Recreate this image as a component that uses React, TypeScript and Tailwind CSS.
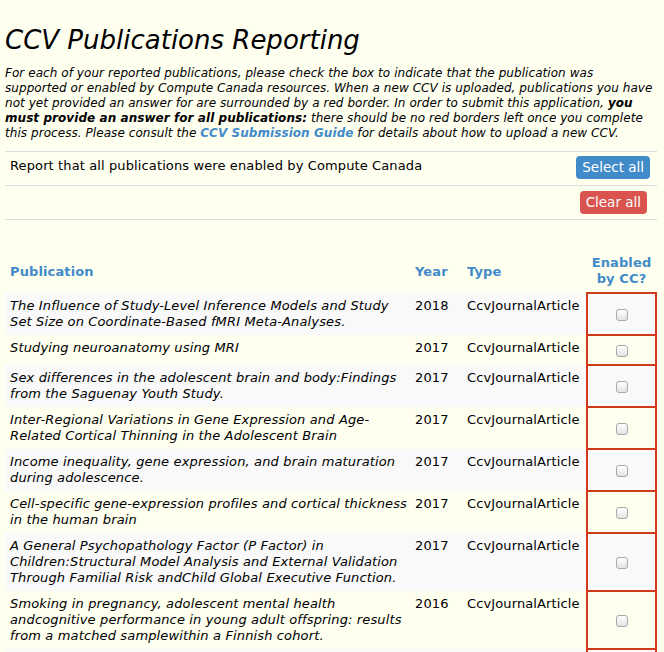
import React from "react"

const pubs = [
  { title: "The Influence of Study-Level Inference Models and Study Set Size on Coordinate-Based fMRI Meta-Analyses.", year: 2018 },
  { title: "Studying neuroanatomy using MRI", year: 2017 },
  { title: "Sex differences in the adolescent brain and body:Findings from the Saguenay Youth Study.", year: 2017 },
  { title: "Inter-Regional Variations in Gene Expression and Age-Related Cortical Thinning in the Adolescent Brain", year: 2017 },
  { title: "Income inequality, gene expression, and brain maturation during adolescence.", year: 2017 },
  { title: "Cell-specific gene-expression profiles and cortical thickness in the human brain", year: 2017 },
  { title: "A General Psychopathology Factor (P Factor) in Children:Structural Model Analysis and External Validation Through Familial Risk andChild Global Executive Function.", year: 2017 },
  { title: "Smoking in pregnancy, adolescent mental health andcognitive performance in young adult offspring: results from a matched samplewithin a Finnish cohort.", year: 2016 },
  { title: "Neuroimaging of the Developing Brain", year: 2016 },
]

function Checkbox() {
  return (
    <span className="inline-block w-[12px] h-[12px] rounded-[3px] border border-[#a9a9a9] bg-gradient-to-b from-white to-[#e3e3e3] align-middle" />
  )
}

export default function App() {
  return (
    <div className="min-h-screen bg-[#fffff0] text-black px-[5px] pr-[7px] font-['DejaVu_Sans',Verdana,sans-serif] text-[13px] leading-[16px] tracking-[0.12px] overflow-hidden h-[652px]">
      <h1 className="italic text-[26px] leading-[32px] pt-[24px] pb-[10px] tracking-normal">CCV Publications Reporting</h1>
      <p className="italic text-[12px] leading-[15px] tracking-[0.06px]">
        For each of your reported publications, please check the box to indicate that the publication was supported or enabled by Compute Canada resources. When a new CCV is uploaded, publications you have not yet provided an answer for are surrounded by a red border. In order to submit this application,{" "}
        <b>you must provide an answer for all publications:</b> there should be no red borders left once you complete this process. Please consult the{" "}
        <a className="font-bold text-[#428bca]">CCV Submission Guide</a> for details about how to upload a new CCV.
      </p>

      <div className="mt-[10px] border-t border-[#dddddd]">
        <div className="flex items-start justify-between h-[33px] pl-[5px] pt-[6px] pr-[7px]">
          <span>Report that all publications were enabled by Compute Canada</span>
          <button className="text-white bg-[#428bca] rounded-[4px] px-[6px] h-[23px] leading-[23px] text-[13.5px] -mt-[2px] tracking-normal">Select all</button>
        </div>
        <div className="flex justify-end h-[34px] border-t border-[#dddddd] pt-[5px] pr-[10px]">
          <button className="text-white bg-[#d9534f] rounded-[4px] px-[6px] h-[23px] leading-[23px] text-[13.5px] tracking-normal">Clear all</button>
        </div>
        <div className="border-t border-[#dddddd]" />
      </div>

      <table className="w-full mt-[35px] border-collapse table-fixed">
        <colgroup>
          <col />
          <col className="w-[52px]" />
          <col className="w-[125px]" />
          <col className="w-[69px]" />
        </colgroup>
        <thead>
          <tr className="text-[#428bca] font-bold">
            <th className="text-left align-middle px-[5px] pb-[5px]">Publication</th>
            <th className="text-left align-middle px-[5px] pb-[5px]">Year</th>
            <th className="text-left align-middle px-[5px] pb-[5px]">Type</th>
            <th className="text-center align-middle px-0 pb-[5px]">Enabled<br />by CC?</th>
          </tr>
        </thead>
        <tbody>
          {pubs.map((p, i) => (
            <tr key={i} className={i % 2 === 0 ? "bg-[#f9f9f9]" : ""}>
              <td className="italic align-top pl-[5px] pr-[1px] py-[5px] tracking-[0.14px]">{p.title}</td>
              <td className="align-top px-[5px] py-[5px]">{p.year}</td>
              <td className="align-top px-[5px] py-[5px] whitespace-nowrap">CcvJournalArticle</td>
              <td className="align-middle text-center border-2 border-[#d0391b] h-[30px]">
                <Checkbox />
              </td>
            </tr>
          ))}
        </tbody>
      </table>
    </div>
  )
}
